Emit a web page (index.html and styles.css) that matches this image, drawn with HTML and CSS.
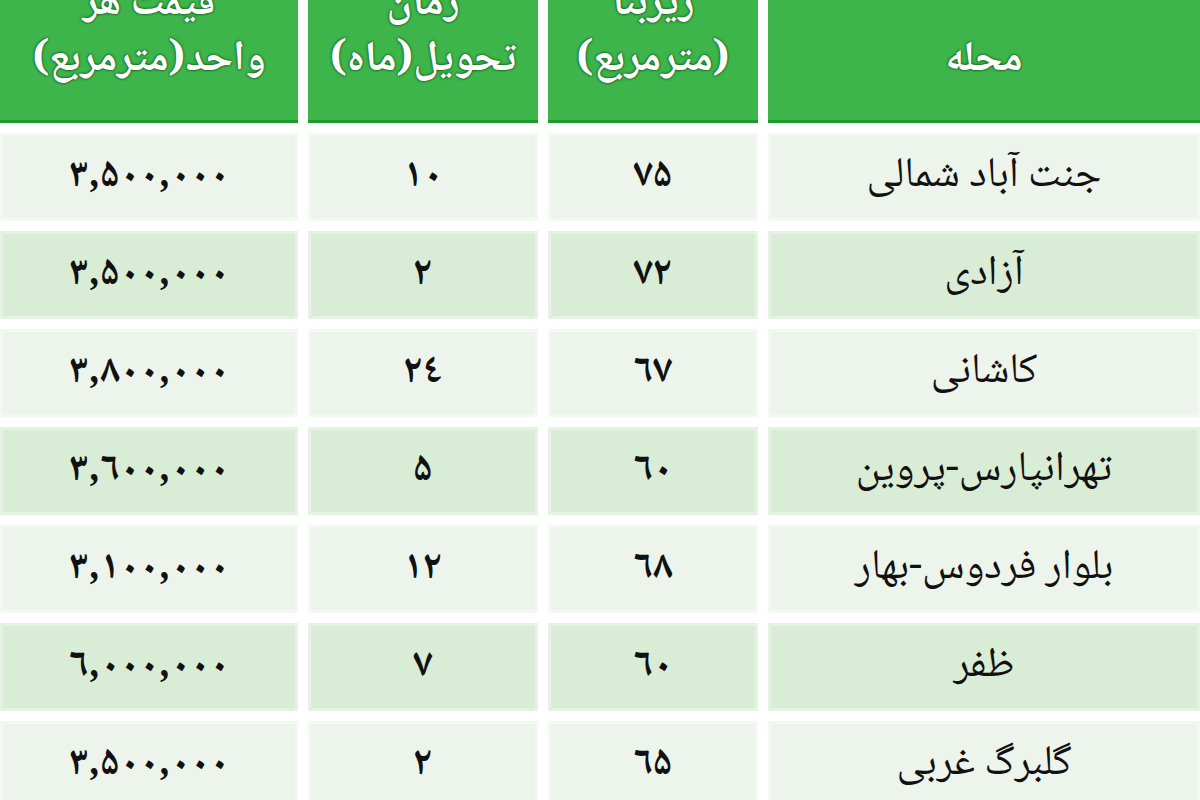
FILE: index.html
```html
<!DOCTYPE html>
<html lang="fa" dir="rtl">
<head>
<meta charset="utf-8">
<title>جدول قیمت</title>
<link rel="stylesheet" href="styles.css">
</head>
<body>
<div class="table">
  <div class="head">محله</div>
  <div class="head">زیربنا<br>(مترمربع)</div>
  <div class="head">زمان<br>تحویل(ماه)</div>
  <div class="head">قیمت هر<br>واحد(مترمربع)</div>

  <div class="cell odd name">جنت آباد شمالی</div>
  <div class="cell odd"><span class="num">۷۵</span></div>
  <div class="cell odd"><span class="num">۱۰</span></div>
  <div class="cell odd"><span class="num">۳,۵۰۰,۰۰۰</span></div>

  <div class="cell even name">آزادی</div>
  <div class="cell even"><span class="num">۷۲</span></div>
  <div class="cell even"><span class="num">۲</span></div>
  <div class="cell even"><span class="num">۳,۵۰۰,۰۰۰</span></div>

  <div class="cell odd name">کاشانی</div>
  <div class="cell odd"><span class="num">٦۷</span></div>
  <div class="cell odd"><span class="num">۲٤</span></div>
  <div class="cell odd"><span class="num">۳,۸۰۰,۰۰۰</span></div>

  <div class="cell even name">تهرانپارس-پروین</div>
  <div class="cell even"><span class="num">٦۰</span></div>
  <div class="cell even"><span class="num">۵</span></div>
  <div class="cell even"><span class="num">۳,٦۰۰,۰۰۰</span></div>

  <div class="cell odd name">بلوار فردوس-بهار</div>
  <div class="cell odd"><span class="num">٦۸</span></div>
  <div class="cell odd"><span class="num">۱۲</span></div>
  <div class="cell odd"><span class="num">۳,۱۰۰,۰۰۰</span></div>

  <div class="cell even name">ظفر</div>
  <div class="cell even"><span class="num">٦۰</span></div>
  <div class="cell even"><span class="num">۷</span></div>
  <div class="cell even"><span class="num">٦,۰۰۰,۰۰۰</span></div>

  <div class="cell odd name">گلبرگ غربی</div>
  <div class="cell odd"><span class="num">٦۵</span></div>
  <div class="cell odd"><span class="num">۲</span></div>
  <div class="cell odd"><span class="num">۳,۵۰۰,۰۰۰</span></div>
</div>
</body>
</html>
```

FILE: styles.css
```css
html, body {
  margin: 0;
  padding: 0;
  background: #ffffff;
  overflow: hidden;
}

body {
  font-family: "Noto Naskh Arabic", "Noto Sans Arabic", "DejaVu Sans", sans-serif;
  direction: rtl;
}

.table {
  margin-top: -40px;
  width: 1200px;
  display: grid;
  grid-template-columns: 432px 210px 230px 298px;
  grid-template-rows: 163px;
  grid-auto-rows: 88px;
  column-gap: 10px;
  row-gap: 10px;
}

.head {
  background: #3db54a;
  border-bottom: 3px solid #1b9a2d;
  color: #ffffff;
  font-weight: bold;
  font-size: 42px;
  line-height: 56px;
  text-align: center;
  display: flex;
  flex-direction: column;
  justify-content: flex-end;
  padding-bottom: 31px;
  text-shadow: 0 0 2px #0f5a1a, 0 0 3px #0f5a1a;
  white-space: nowrap;
}

.cell {
  display: flex;
  align-items: center;
  justify-content: center;
  color: #111111;
  font-size: 42px;
  box-shadow: inset 0 0 0 3px rgba(255, 255, 255, 0.35);
  white-space: nowrap;
}

.odd {
  background: #edf4ec;
}

.even {
  background: #d9ecd5;
}

.num {
  direction: ltr;
  unicode-bidi: bidi-override;
  font-weight: bold;
  font-size: 40px;
  letter-spacing: 3px;
}
```
